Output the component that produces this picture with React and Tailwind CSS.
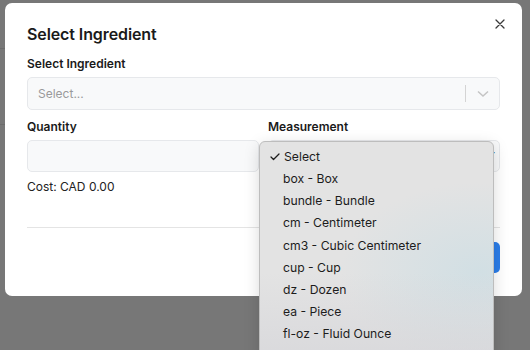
import { Check } from 'lucide-react'

const units = [
  'box - Box',
  'bundle - Bundle',
  'cm - Centimeter',
  'cm3 - Cubic Centimeter',
  'cup - Cup',
  'dz - Dozen',
  'ea - Piece',
  'fl-oz - Fluid Ounce',
  'g - Gram',
]

export default function App() {
  return (
    <div className="relative w-[530px] h-[350px] overflow-hidden bg-[#777777] font-['Inter',sans-serif]">
      {/* backdrop hints of the page underneath */}
      <div className="absolute left-0 top-[48px] w-[6px] h-px bg-[#6c6c6c]" />
      <div className="absolute left-0 top-[124px] w-[6px] h-px bg-[#6c6c6c]" />

      {/* ── Modal ─────────────────────────────────────────── */}
      <div className="ml-[5px] mt-[3px] w-[517px] h-[293px] rounded-[7px] bg-white px-[22px] pt-[20px] relative">
        <div className="flex items-start justify-between">
          <h2 className="text-[16px] leading-[22px] font-semibold text-[#1a1a1a] tracking-[-0.1px]">Select Ingredient</h2>
          <button className="absolute right-[17px] top-[16px] text-[#3a3a3a]">
            <svg width="10" height="10" viewBox="0 0 10 10" stroke="currentColor" strokeWidth="1.3" strokeLinecap="round">
              <path d="M1 1 L9 9 M9 1 L1 9" />
            </svg>
          </button>
        </div>

        <div className="mt-[11px] text-[12px] leading-[16px] font-semibold text-[#1a1a1a]">Select Ingredient</div>
        <div className="mt-[5px] h-[33px] rounded-[5px] border border-[#e6e8eb] bg-[#f8f9fa] flex items-center pl-[10px]">
          <span className="flex-1 text-[12px] text-[#9a9a9a]">Select...</span>
          <span className="w-px h-[17px] bg-[#d4d4d4]" />
          <span className="w-[33px] flex justify-center text-[#c4c4c4]">
            <svg width="12" height="8" viewBox="0 0 12 8" fill="none" stroke="currentColor" strokeWidth="1.5">
              <path d="M1 1.5 L6 6 L11 1.5" />
            </svg>
          </span>
        </div>

        <div className="mt-[9px] grid grid-cols-2 gap-[9px]">
          <div>
            <div className="text-[12px] leading-[16px] font-semibold text-[#1a1a1a]">Quantity</div>
            <div className="mt-[5px] h-[32px] rounded-[5px] border border-[#e6e8eb] bg-[#f8f9fa]" />
          </div>
          <div>
            <div className="text-[12px] leading-[16px] font-semibold text-[#1a1a1a]">Measurement</div>
            <div className="mt-[5px] h-[32px] rounded-[5px] border border-[#e6e8eb] bg-[#f8f9fa] flex items-center justify-end pr-[4px]">
              <span className="text-[9px] text-[#222]">▼</span>
            </div>
          </div>
        </div>

        <div className="mt-[7px] text-[12px] leading-[16px] text-[#222]">Cost: CAD 0.00</div>

        <div className="mt-[32px] h-px bg-[#e4e4e4]" />

        <div className="mt-[14px] flex justify-end">
          <button className="h-[31px] px-4 rounded-[5px] bg-[#2b7de9] text-white text-[13px] font-medium">Save</button>
        </div>
      </div>

      {/* ── Native select popup ───────────────────────────── */}
      <div className="absolute left-[259px] top-[141px] w-[235px] h-[220px] rounded-[6px] border border-[#bdbdbd] bg-[#e3e3e3] shadow-[0_4px_16px_rgba(0,0,0,0.15)] overflow-hidden">
        <div className="absolute inset-0 bg-[radial-gradient(ellipse_140px_90px_at_220px_130px,rgba(205,222,228,0.8),transparent)]" />
        <div className="absolute inset-0 bg-[linear-gradient(to_bottom,transparent_60%,rgba(210,210,215,0.6))]" />
        <div className="relative pt-[4px] font-['Inter',sans-serif] text-[12.2px] text-[#1c1c1c]">
          <div className="h-[22px] flex items-center pl-[9px]">
            <Check size={12} strokeWidth={2.5} className="mr-[3px]" />
            <span>Select</span>
          </div>
          {units.map((u) => (
            <div key={u} className="h-[22.2px] flex items-center pl-[23px]">
              {u}
            </div>
          ))}
        </div>
      </div>
    </div>
  )
}
